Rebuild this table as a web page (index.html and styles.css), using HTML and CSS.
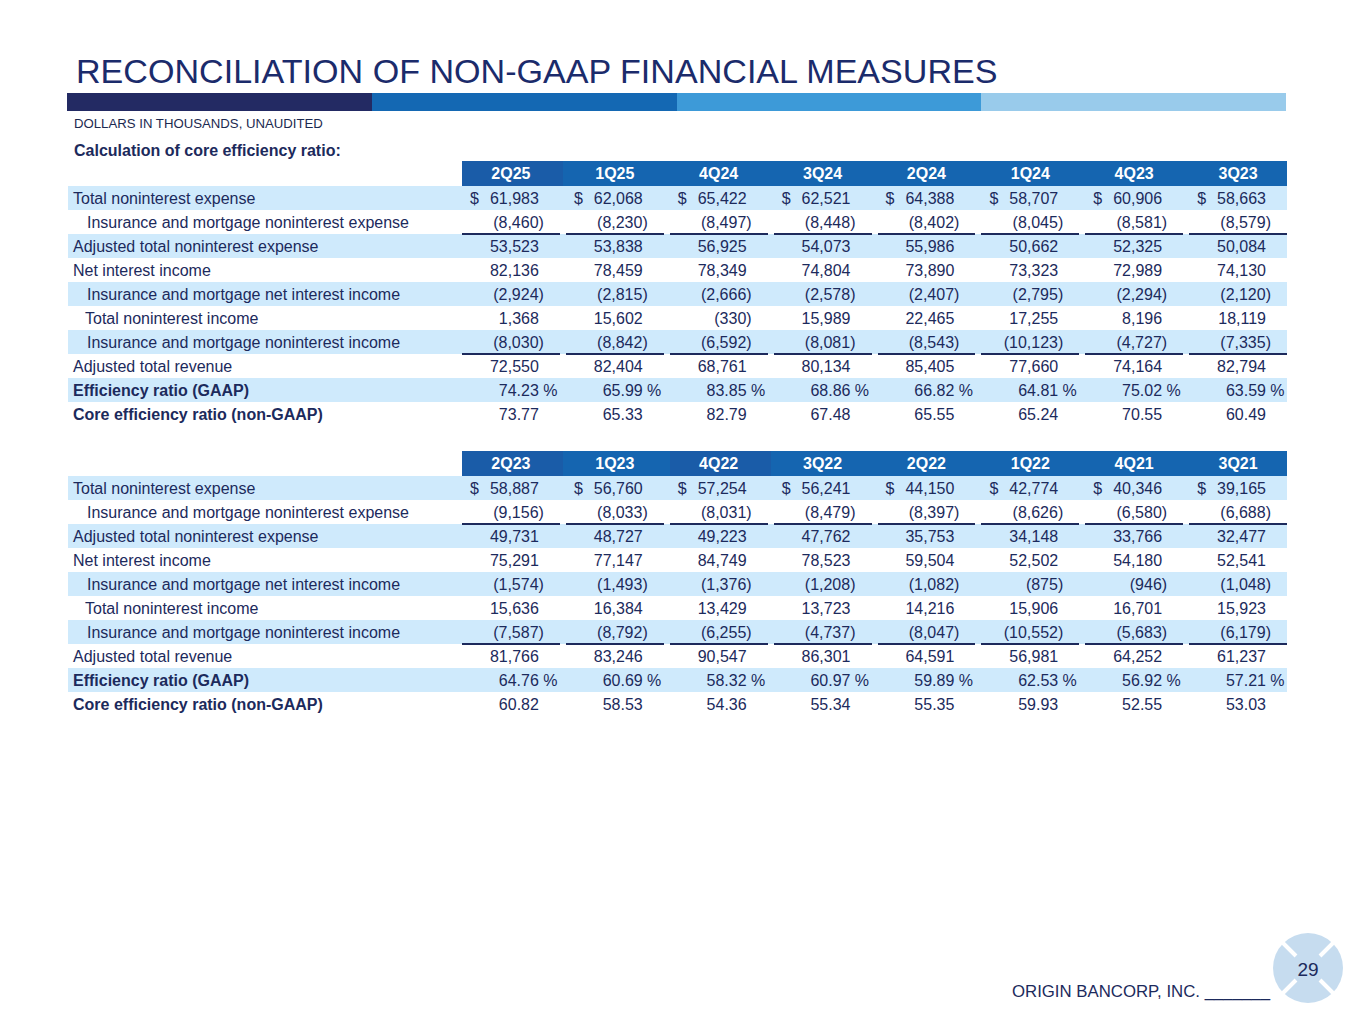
FILE: index.html
```html
<!DOCTYPE html>
<html lang="en">
<head>
<meta charset="utf-8">
<title>Reconciliation of Non-GAAP Financial Measures</title>
<link rel="stylesheet" href="styles.css">
</head>
<body>
<div class="slide">
  <h1 class="title">RECONCILIATION OF NON-GAAP FINANCIAL MEASURES</h1>
  <div class="bar"><span class="s1"></span><span class="s2"></span><span class="s3"></span><span class="s4"></span></div>
  <div class="sub">DOLLARS IN THOUSANDS, UNAUDITED</div>
  <div class="heading">Calculation of core efficiency ratio:</div>

  <div class="tbl">
    <div class="row hdr"><span></span><span class="h dk">2Q25</span><span class="h">1Q25</span><span class="h">4Q24</span><span class="h">3Q24</span><span class="h">2Q24</span><span class="h">1Q24</span><span class="h">4Q23</span><span class="h">3Q23</span></div>
    <div class="row f"><span class="l">Total noninterest expense</span><span class="v"><i>$</i>61,983</span><span class="v"><i>$</i>62,068</span><span class="v"><i>$</i>65,422</span><span class="v"><i>$</i>62,521</span><span class="v"><i>$</i>64,388</span><span class="v"><i>$</i>58,707</span><span class="v"><i>$</i>60,906</span><span class="v"><i>$</i>58,663</span></div>
    <div class="row ul"><span class="l in">Insurance and mortgage noninterest expense</span><span class="v">(8,460<span class="rp">)</span></span><span class="v">(8,230<span class="rp">)</span></span><span class="v">(8,497<span class="rp">)</span></span><span class="v">(8,448<span class="rp">)</span></span><span class="v">(8,402<span class="rp">)</span></span><span class="v">(8,045<span class="rp">)</span></span><span class="v">(8,581<span class="rp">)</span></span><span class="v">(8,579<span class="rp">)</span></span></div>
    <div class="row f"><span class="l">Adjusted total noninterest expense</span><span class="v">53,523</span><span class="v">53,838</span><span class="v">56,925</span><span class="v">54,073</span><span class="v">55,986</span><span class="v">50,662</span><span class="v">52,325</span><span class="v">50,084</span></div>
    <div class="row"><span class="l">Net interest income</span><span class="v">82,136</span><span class="v">78,459</span><span class="v">78,349</span><span class="v">74,804</span><span class="v">73,890</span><span class="v">73,323</span><span class="v">72,989</span><span class="v">74,130</span></div>
    <div class="row f"><span class="l in">Insurance and mortgage net interest income</span><span class="v">(2,924<span class="rp">)</span></span><span class="v">(2,815<span class="rp">)</span></span><span class="v">(2,666<span class="rp">)</span></span><span class="v">(2,578<span class="rp">)</span></span><span class="v">(2,407<span class="rp">)</span></span><span class="v">(2,795<span class="rp">)</span></span><span class="v">(2,294<span class="rp">)</span></span><span class="v">(2,120<span class="rp">)</span></span></div>
    <div class="row"><span class="l in2">Total noninterest income</span><span class="v">1,368</span><span class="v">15,602</span><span class="v">(330<span class="rp">)</span></span><span class="v">15,989</span><span class="v">22,465</span><span class="v">17,255</span><span class="v">8,196</span><span class="v">18,119</span></div>
    <div class="row f ul"><span class="l in">Insurance and mortgage noninterest income</span><span class="v">(8,030<span class="rp">)</span></span><span class="v">(8,842<span class="rp">)</span></span><span class="v">(6,592<span class="rp">)</span></span><span class="v">(8,081<span class="rp">)</span></span><span class="v">(8,543<span class="rp">)</span></span><span class="v">(10,123<span class="rp">)</span></span><span class="v">(4,727<span class="rp">)</span></span><span class="v">(7,335<span class="rp">)</span></span></div>
    <div class="row"><span class="l">Adjusted total revenue</span><span class="v">72,550</span><span class="v">82,404</span><span class="v">68,761</span><span class="v">80,134</span><span class="v">85,405</span><span class="v">77,660</span><span class="v">74,164</span><span class="v">82,794</span></div>
    <div class="row f"><span class="l b">Efficiency ratio (GAAP)</span><span class="v">74.23<span class="pc">%</span></span><span class="v">65.99<span class="pc">%</span></span><span class="v">83.85<span class="pc">%</span></span><span class="v">68.86<span class="pc">%</span></span><span class="v">66.82<span class="pc">%</span></span><span class="v">64.81<span class="pc">%</span></span><span class="v">75.02<span class="pc">%</span></span><span class="v">63.59<span class="pc">%</span></span></div>
    <div class="row"><span class="l b">Core efficiency ratio (non-GAAP)</span><span class="v">73.77</span><span class="v">65.33</span><span class="v">82.79</span><span class="v">67.48</span><span class="v">65.55</span><span class="v">65.24</span><span class="v">70.55</span><span class="v">60.49</span></div>
  </div>

  <div class="tbl second">
    <div class="row hdr"><span></span><span class="h dk">2Q23</span><span class="h">1Q23</span><span class="h dk">4Q22</span><span class="h">3Q22</span><span class="h">2Q22</span><span class="h">1Q22</span><span class="h">4Q21</span><span class="h">3Q21</span></div>
    <div class="row f"><span class="l">Total noninterest expense</span><span class="v"><i>$</i>58,887</span><span class="v"><i>$</i>56,760</span><span class="v"><i>$</i>57,254</span><span class="v"><i>$</i>56,241</span><span class="v"><i>$</i>44,150</span><span class="v"><i>$</i>42,774</span><span class="v"><i>$</i>40,346</span><span class="v"><i>$</i>39,165</span></div>
    <div class="row ul"><span class="l in">Insurance and mortgage noninterest expense</span><span class="v">(9,156<span class="rp">)</span></span><span class="v">(8,033<span class="rp">)</span></span><span class="v">(8,031<span class="rp">)</span></span><span class="v">(8,479<span class="rp">)</span></span><span class="v">(8,397<span class="rp">)</span></span><span class="v">(8,626<span class="rp">)</span></span><span class="v">(6,580<span class="rp">)</span></span><span class="v">(6,688<span class="rp">)</span></span></div>
    <div class="row f"><span class="l">Adjusted total noninterest expense</span><span class="v">49,731</span><span class="v">48,727</span><span class="v">49,223</span><span class="v">47,762</span><span class="v">35,753</span><span class="v">34,148</span><span class="v">33,766</span><span class="v">32,477</span></div>
    <div class="row"><span class="l">Net interest income</span><span class="v">75,291</span><span class="v">77,147</span><span class="v">84,749</span><span class="v">78,523</span><span class="v">59,504</span><span class="v">52,502</span><span class="v">54,180</span><span class="v">52,541</span></div>
    <div class="row f"><span class="l in">Insurance and mortgage net interest income</span><span class="v">(1,574<span class="rp">)</span></span><span class="v">(1,493<span class="rp">)</span></span><span class="v">(1,376<span class="rp">)</span></span><span class="v">(1,208<span class="rp">)</span></span><span class="v">(1,082<span class="rp">)</span></span><span class="v">(875<span class="rp">)</span></span><span class="v">(946<span class="rp">)</span></span><span class="v">(1,048<span class="rp">)</span></span></div>
    <div class="row"><span class="l in2">Total noninterest income</span><span class="v">15,636</span><span class="v">16,384</span><span class="v">13,429</span><span class="v">13,723</span><span class="v">14,216</span><span class="v">15,906</span><span class="v">16,701</span><span class="v">15,923</span></div>
    <div class="row f ul"><span class="l in">Insurance and mortgage noninterest income</span><span class="v">(7,587<span class="rp">)</span></span><span class="v">(8,792<span class="rp">)</span></span><span class="v">(6,255<span class="rp">)</span></span><span class="v">(4,737<span class="rp">)</span></span><span class="v">(8,047<span class="rp">)</span></span><span class="v">(10,552<span class="rp">)</span></span><span class="v">(5,683<span class="rp">)</span></span><span class="v">(6,179<span class="rp">)</span></span></div>
    <div class="row"><span class="l">Adjusted total revenue</span><span class="v">81,766</span><span class="v">83,246</span><span class="v">90,547</span><span class="v">86,301</span><span class="v">64,591</span><span class="v">56,981</span><span class="v">64,252</span><span class="v">61,237</span></div>
    <div class="row f"><span class="l b">Efficiency ratio (GAAP)</span><span class="v">64.76<span class="pc">%</span></span><span class="v">60.69<span class="pc">%</span></span><span class="v">58.32<span class="pc">%</span></span><span class="v">60.97<span class="pc">%</span></span><span class="v">59.89<span class="pc">%</span></span><span class="v">62.53<span class="pc">%</span></span><span class="v">56.92<span class="pc">%</span></span><span class="v">57.21<span class="pc">%</span></span></div>
    <div class="row"><span class="l b">Core efficiency ratio (non-GAAP)</span><span class="v">60.82</span><span class="v">58.53</span><span class="v">54.36</span><span class="v">55.34</span><span class="v">55.35</span><span class="v">59.93</span><span class="v">52.55</span><span class="v">53.03</span></div>
  </div>

  <div class="footer">
    <div class="company">ORIGIN BANCORP, INC. _______</div>
    <div class="logo">
      <svg width="70" height="70" viewBox="0 0 70 70" aria-hidden="true">
        <circle cx="35" cy="35" r="35" fill="#c6dcef"/>
        <path d="M6 6 L23 23 M64 6 L47 23 M6 64 L23 47 M64 64 L47 47" stroke="#ffffff" stroke-width="4" fill="none"/>
      </svg>
      <span class="num">29</span>
    </div>
  </div>
</div>
</body>
</html>
```

FILE: styles.css
```css
* { box-sizing: border-box; }
html, body { margin: 0; padding: 0; background: #ffffff; }
body { font-family: "Liberation Sans", Arial, sans-serif; color: #1c2a5c; }

.slide {
  width: 1365px;
  height: 1024px;
  display: flex;
  flex-direction: column;
  overflow: hidden;
}

.title {
  margin: 51px 0 2px 76px;
  font-size: 34.1px;
  line-height: 40px;
  font-weight: normal;
  color: #1b2b6b;
  white-space: nowrap;
}

.bar {
  margin-left: 67px;
  width: 1219px;
  height: 18px;
  display: flex;
}
.bar span { flex: 1; }
.bar .s1 { background: #232a63; }
.bar .s2 { background: #1468b3; }
.bar .s3 { background: #3d9ad8; }
.bar .s4 { background: #99cbeb; }

.sub {
  margin: 4px 0 0 74px;
  font-size: 13.2px;
  line-height: 17px;
  color: #1c2a50;
}

.heading {
  margin: 9px 0 1px 74px;
  font-size: 16px;
  line-height: 19px;
  font-weight: bold;
  color: #1c2a5c;
}

.tbl {
  margin-left: 68px;
  width: 1219px;
  font-size: 16px;
}
.tbl.second { margin-top: 25px; }

.row {
  display: grid;
  grid-template-columns: 388px repeat(8, 1fr);
  column-gap: 6px;
  height: 24px;
  line-height: 24px;
}
.row > span { padding-top: 1px; }
.row.f { background: #cfeafc; }

.row.hdr {
  height: 25px;
  line-height: 24px;
  background: linear-gradient(to right, transparent 394px, #1565b0 394px);
}
.h {
  color: #ffffff;
  font-weight: bold;
  text-align: center;
}
.h.dk {
  background: #1a5ca8;
  box-shadow: 3px 0 0 #1a5ca8;
}

.l {
  padding-left: 5px;
  white-space: nowrap;
}
.l.in { padding-left: 19px; }
.l.in2 { padding-left: 17px; }
.l.b { font-weight: bold; }

.v {
  display: flex;
  justify-content: flex-end;
  padding: 1px 21px 0 8px;
  white-space: nowrap;
}
.v i {
  font-style: normal;
  margin-right: auto;
}
.v .rp { margin-right: -5px; }
.v .pc { margin-left: 4.4px; margin-right: -18.6px; }

.row.ul .v { box-shadow: inset 0 -2px 0 #1d2a5c; }

.footer {
  margin-top: auto;
  display: flex;
  justify-content: flex-end;
  align-items: flex-end;
  gap: 3px;
  padding: 0 22px 21px 0;
}
.company {
  font-size: 16.8px;
  line-height: 18px;
  margin-bottom: 2px;
  color: #1c2a5c;
  white-space: pre;
}
.logo {
  position: relative;
  width: 70px;
  height: 70px;
}
.logo svg { display: block; }
.logo .num {
  position: absolute;
  left: 0;
  right: 0;
  top: 26px;
  text-align: center;
  font-size: 19px;
  line-height: 22px;
  color: #1c2a5c;
}
```
